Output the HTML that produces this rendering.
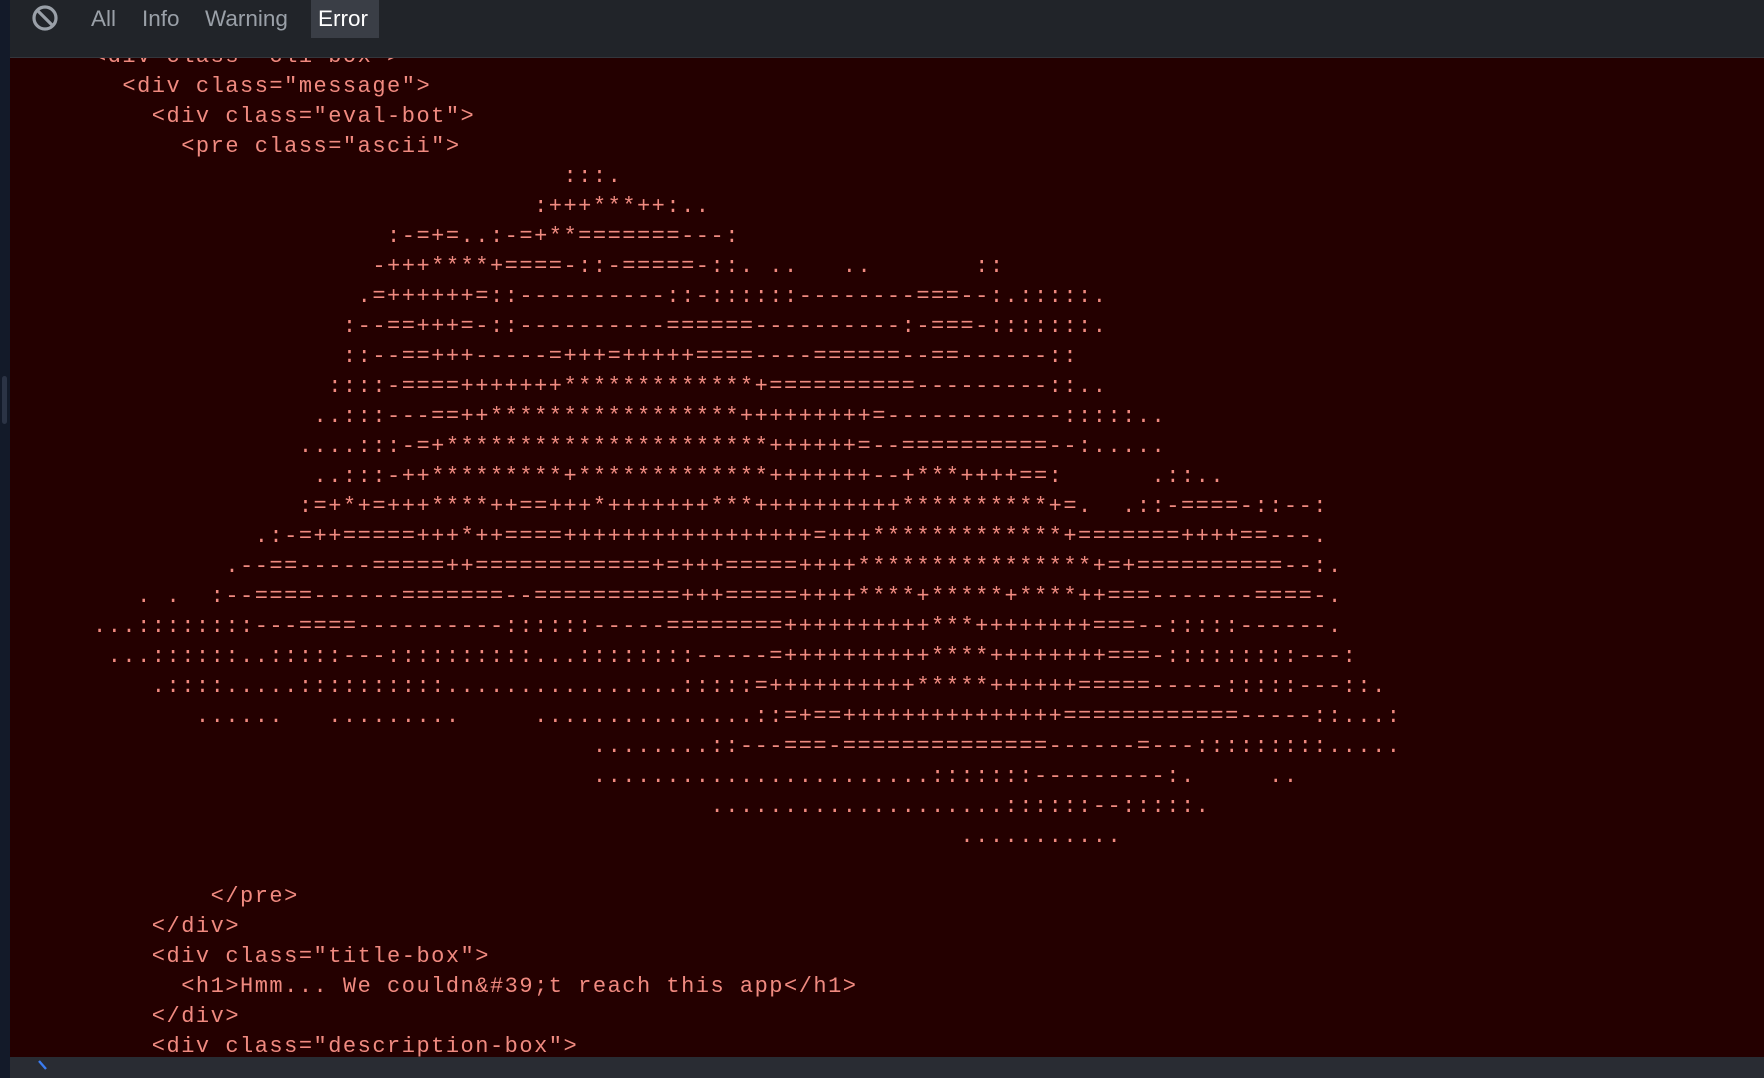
<!DOCTYPE html>
<html><head><meta charset="utf-8"><style>
html,body{margin:0;padding:0;width:1764px;height:1078px;overflow:hidden;background:#240000;position:relative;}
#strip{position:absolute;left:0;top:0;width:10px;height:1078px;background:#131a29;}
#thumb{position:absolute;left:2px;top:376px;width:5px;height:48px;border-radius:3px;background:#2b3345;}
#bar{position:absolute;left:10px;top:0;width:1754px;height:57px;background:#212429;border-bottom:1px solid #33363c;z-index:2;font-family:"Liberation Sans",sans-serif;font-size:22.5px;color:#9aa0a8;}
#bar span{position:absolute;top:4px;line-height:30px;}
#err{position:absolute;left:301px;top:0;width:68px;height:38px;background:#3a3e46;}
#bottom{position:absolute;left:10px;top:1057px;width:1754px;height:21px;background:#292c33;z-index:2;}
pre{position:absolute;left:93px;top:42px;margin:0;font-family:"Liberation Mono",monospace;font-size:22px;letter-spacing:1.5px;line-height:30px;color:#f08a80;white-space:pre;}
</style></head><body>
<div id="strip"><div id="thumb"></div></div>
<div id="bar">
<svg style="position:absolute;left:21px;top:4px" width="28" height="28" viewBox="0 0 28 28"><circle cx="14" cy="14" r="11" fill="none" stroke="#9aa0a8" stroke-width="3.2"/><line x1="6.5" y1="6.5" x2="21.5" y2="21.5" stroke="#9aa0a8" stroke-width="3.2"/></svg>
<span style="left:81px">All</span>
<span style="left:132px">Info</span>
<div id="err"></div>
<span style="left:195px">Warning</span>
<span style="left:308px;color:#fff">Error</span>
</div>
<pre>&lt;div class="cli-box"&gt;
  &lt;div class="message"&gt;
    &lt;div class="eval-bot"&gt;
      &lt;pre class="ascii"&gt;
                                :::.
                              :+++***++:..
                    :-=+=..:-=+**=======---:
                   -+++****+====-::-=====-::. ..   ..       ::
                  .=++++++=::----------::-::::::--------===--:.:::::.
                 :--==+++=-::----------======----------:-===-:::::::.
                 ::--==+++-----=+++=+++++====----======--==------::
                ::::-====+++++++*************+==========---------::..
               ..:::---==++*****************+++++++++=------------:::::..
              ....:::-=+**********************++++++=--==========--:.....
               ..:::-++*********+*************+++++++--+***++++==:      .::..
              :=+*+=+++****++==+++*+++++++***++++++++++**********+=.  .::-====-::--:
           .:-=++=====+++*++====+++++++++++++++++=+++*************+=======++++==---.
         .--==-----=====++============+=+++=====++++****************+=+==========--:.
   . .  :--====------=======--==========+++=====++++****+*****+****++===-------====-.
...::::::::---====----------::::::-----========++++++++++***++++++++===--:::::------.
 ...::::::..:::::---::::::::::...::::::::-----=++++++++++****++++++++===-:::::::::---:
    .::::.....::::::::::................:::::=++++++++++*****++++++=====-----:::::---::.
       ......   .........     ...............::=+==+++++++++++++++============-----::...:
                                  ........::---===-==============------=---:::::::::.....
                                  .......................:::::::---------:.     ..
                                          ....................::::::--:::::.
                                                           ...........

        &lt;/pre&gt;
    &lt;/div&gt;
    &lt;div class="title-box"&gt;
      &lt;h1&gt;Hmm... We couldn&amp;#39;t reach this app&lt;/h1&gt;
    &lt;/div&gt;
    &lt;div class="description-box"&gt;</pre>
<div id="bottom"><svg style="position:absolute;left:26px;top:2px" width="14" height="19" viewBox="0 0 14 19"><polyline points="3,2 10,10" fill="none" stroke="#3b7cf0" stroke-width="2.4"/></svg></div>
</body></html>
